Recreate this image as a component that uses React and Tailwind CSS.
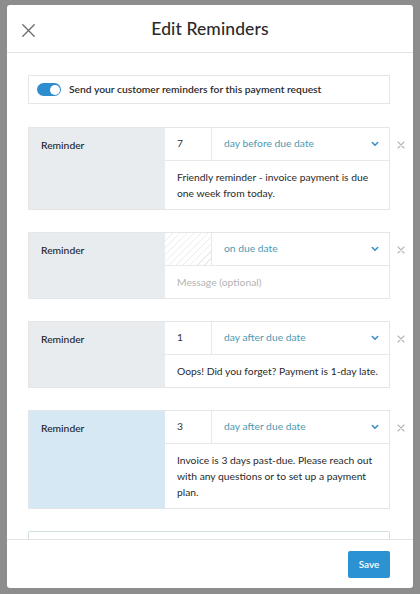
import React from "react";

function Chevron() {
  return (
    <svg width="8" height="6" viewBox="0 0 8 6" className="shrink-0">
      <path d="M1.3 1.5 L4 4.2 L6.7 1.5" fill="none" stroke="#3a8fc4" strokeWidth="1.6" strokeLinecap="round" strokeLinejoin="round" />
    </svg>
  );
}

function SmallX() {
  return (
    <svg width="8" height="8" viewBox="0 0 8 8" className="shrink-0">
      <path d="M1 1 L7 7 M7 1 L1 7" stroke="#b5b5b5" strokeWidth="1.1" strokeLinecap="round" />
    </svg>
  );
}

function Reminder({ num, when, message, placeholder, hatched, labelBg = "bg-[#e9ecef]" }) {
  return (
    <div className="flex items-start">
      <div className="w-[362px] flex border border-[#e4e6e8] shrink-0">
        <div className={`w-[136px] shrink-0 ${labelBg} pl-[12px] pt-[10px] text-[10.3px] leading-[14px] text-[#222] font-medium`}>
          Reminder
        </div>
        <div className="flex-1 flex flex-col bg-white">
          <div className="flex h-[33px] border-b border-[#e8e8e8]">
            <div
              className={`w-[47px] shrink-0 border-r border-[#e8e8e8] pl-[12px] flex items-center text-[10.3px] text-[#333] ${
                hatched
                  ? "bg-[repeating-linear-gradient(135deg,#ececec_0px,#ececec_1px,#ffffff_1px,#ffffff_5px)]"
                  : ""
              }`}
            >
              {num}
            </div>
            <div className="flex-1 flex items-center pl-[12px] pr-[10px]">
              <span className="flex-1 text-[10.3px] text-[#4d9ab3]">{when}</span>
              <Chevron />
            </div>
          </div>
          <div
            className={`pl-[12px] pr-[6px] py-[8px] text-[10.3px] leading-[16px] whitespace-nowrap ${
              placeholder ? "text-[#b3b3b3]" : "text-[#2a2a2a]"
            }`}
          >
            {message}
          </div>
        </div>
      </div>
      <div className="ml-[7px] mt-[14px]">
        <SmallX />
      </div>
    </div>
  );
}

export default function App() {
  return (
    <div
      className="w-[420px] h-[594px] bg-[#8d8d8d] overflow-hidden pt-[5px] pl-[7px]"
      style={{ fontFamily: "Lato, 'Noto Sans', sans-serif" }}
    >
      <div className="w-[406px] h-[583px] bg-white rounded-[3px] flex flex-col overflow-hidden">
        {/* header */}
        <div className="h-[48px] shrink-0 border-b border-[#e3e3e3] relative flex items-center justify-center">
          <div className="absolute left-[15px] top-[19px]">
            <svg width="13" height="13" viewBox="0 0 13 13">
              <path d="M0.8 0.8 L12.2 12.2 M12.2 0.8 L0.8 12.2" stroke="#6b6b6b" strokeWidth="1.3" strokeLinecap="round" />
            </svg>
          </div>
          <div className="text-[17.5px] text-[#2a2a2a] font-medium tracking-[0.1px] mt-[2px]">Edit Reminders</div>
        </div>

        {/* body */}
        <div className="flex-1 overflow-hidden pl-[21px] pt-[22px] flex flex-col">
          <div className="w-[362px] h-[29px] border border-[#e6e6e6] flex items-center pl-[8px] shrink-0">
            <div className="w-[24px] h-[13px] rounded-full bg-[#2e8dcf] relative shrink-0">
              <div className="absolute right-[1.5px] top-[1.5px] w-[10px] h-[10px] rounded-full bg-white" />
            </div>
            <span className="ml-[8px] text-[10.3px] text-[#2a2a2a] font-semibold">
              Send your customer reminders for this payment request
            </span>
          </div>

          <div className="mt-[23px] flex flex-col gap-[22px]">
            <Reminder
              num="7"
              when="day before due date"
              message={<>Friendly reminder - invoice payment is due<br />one week from today.</>}
            />
            <Reminder num="" hatched when="on due date" message="Message (optional)" placeholder />
            <Reminder num="1" when="day after due date" message="Oops! Did you forget? Payment is 1-day late." />
            <Reminder
              num="3"
              when="day after due date"
              labelBg="bg-[#d5e8f4]"
              message={<>Invoice is 3 days past-due. Please reach out<br />with any questions or to set up a payment<br />plan.</>}
            />
            <div className="w-[362px] h-[40px] border border-[#cfe0e3] rounded-t-[2px] shrink-0" />
          </div>
        </div>

        {/* footer */}
        <div className="h-[49px] shrink-0 border-t border-[#e3e3e3] flex items-center justify-end pr-[23px]">
          <button className="w-[42px] h-[27px] rounded-[2px] bg-[#2b93d1] text-white text-[10px] font-semibold">
            Save
          </button>
        </div>
      </div>
    </div>
  );
}
